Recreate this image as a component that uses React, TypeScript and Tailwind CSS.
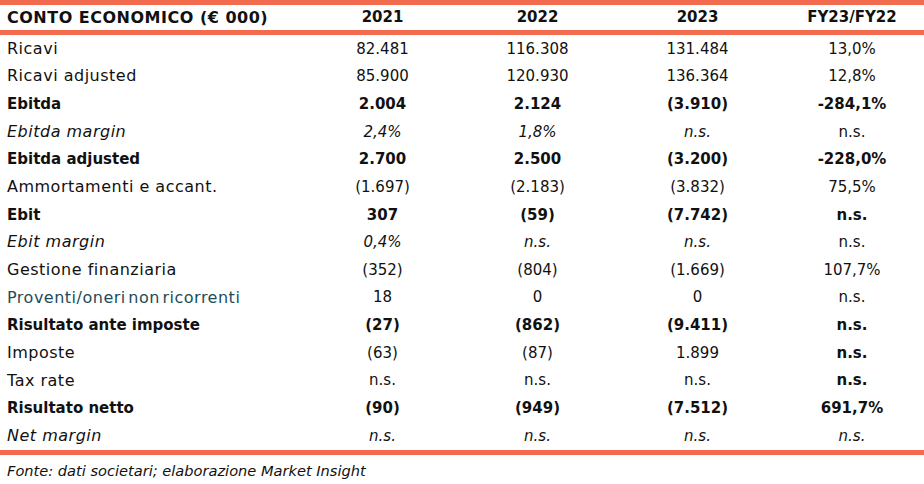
type Cell = [string, string];

const ROWS: { label: string; style: string; cells: Cell[] }[] = [
  { label: 'Ricavi', style: '', cells: [['82.481', ''], ['116.308', ''], ['131.484', ''], ['13,0%', '']] },
  { label: 'Ricavi adjusted', style: '', cells: [['85.900', ''], ['120.930', ''], ['136.364', ''], ['12,8%', '']] },
  { label: 'Ebitda', style: 'b', cells: [['2.004', 'b'], ['2.124', 'b'], ['(3.910)', 'b'], ['-284,1%', 'b']] },
  { label: 'Ebitda margin', style: 'i', cells: [['2,4%', 'i'], ['1,8%', 'i'], ['n.s.', 'i'], ['n.s.', '']] },
  { label: 'Ebitda adjusted', style: 'b', cells: [['2.700', 'b'], ['2.500', 'b'], ['(3.200)', 'b'], ['-228,0%', 'b']] },
  { label: 'Ammortamenti e accant.', style: '', cells: [['(1.697)', ''], ['(2.183)', ''], ['(3.832)', ''], ['75,5%', '']] },
  { label: 'Ebit', style: 'b', cells: [['307', 'b'], ['(59)', 'b'], ['(7.742)', 'b'], ['n.s.', 'b']] },
  { label: 'Ebit margin', style: 'i', cells: [['0,4%', 'i'], ['n.s.', 'i'], ['n.s.', 'i'], ['n.s.', '']] },
  { label: 'Gestione finanziaria', style: '', cells: [['(352)', ''], ['(804)', ''], ['(1.669)', ''], ['107,7%', '']] },
  { label: 'Proventi/oneri non ricorrenti', style: 't', cells: [['18', ''], ['0', ''], ['0', ''], ['n.s.', '']] },
  { label: 'Risultato ante imposte', style: 'b', cells: [['(27)', 'b'], ['(862)', 'b'], ['(9.411)', 'b'], ['n.s.', 'b']] },
  { label: 'Imposte', style: '', cells: [['(63)', ''], ['(87)', ''], ['1.899', ''], ['n.s.', 'b']] },
  { label: 'Tax rate', style: '', cells: [['n.s.', ''], ['n.s.', ''], ['n.s.', ''], ['n.s.', 'b']] },
  { label: 'Risultato netto', style: 'b', cells: [['(90)', 'b'], ['(949)', 'b'], ['(7.512)', 'b'], ['691,7%', 'b']] },
  { label: 'Net margin', style: 'i', cells: [['n.s.', 'i'], ['n.s.', 'i'], ['n.s.', 'i'], ['n.s.', 'i']] },
];

function cls(s: string) {
  if (s === 'b') return 'font-bold';
  if (s === 'i') return 'italic';
  if (s === 't') return 'text-[#1d4c58]';
  return '';
}

// labels in the reference font run wider than numbers, so regular labels get a bit of tracking
function labelCls(s: string) {
  if (s === 'b') return 'font-bold text-[15px]';
  if (s === 'i') return 'italic text-[16px] tracking-[0.5px]';
  if (s === 't') return 'text-[#1d4c58] text-[16px] tracking-[0.5px] [word-spacing:-3px]';
  return 'text-[16px] tracking-[0.5px]';
}

export default function App() {
  return (
    <div className="w-[924px] h-[484px] bg-white text-[#111] font-['DejaVu_Sans',sans-serif] text-[15px]">
      <div className="h-[5px] bg-[#f26b4f]" />
      <div className="grid grid-cols-[305px_155px_155px_165px_144px] h-[25px] items-center font-bold text-[15px]">
        <div className="pl-[7px] text-[16px] tracking-[0.5px]">CONTO ECONOMICO (€ 000)</div>
        <div className="text-center">2021</div>
        <div className="text-center">2022</div>
        <div className="text-center">2023</div>
        <div className="text-center">FY23/FY22</div>
      </div>
      <div className="h-[5px] bg-[#f26b4f]" />
      {ROWS.map((r, i) => (
        <div key={i} className="grid grid-cols-[305px_155px_155px_165px_144px] h-[27.67px] items-center">
          <div className={`pl-[7px] whitespace-nowrap ${labelCls(r.style)}`}>{r.label}</div>
          {r.cells.map((c, j) => (
            <div key={j} className={`text-center ${cls(c[1])}`}>{c[0]}</div>
          ))}
        </div>
      ))}
      <div className="h-[5px] bg-[#f26b4f]" />
      <div className="pl-[7px] pt-[5px] italic text-[14.6px]">Fonte: dati societari; elaborazione Market Insight</div>
    </div>
  );
}
